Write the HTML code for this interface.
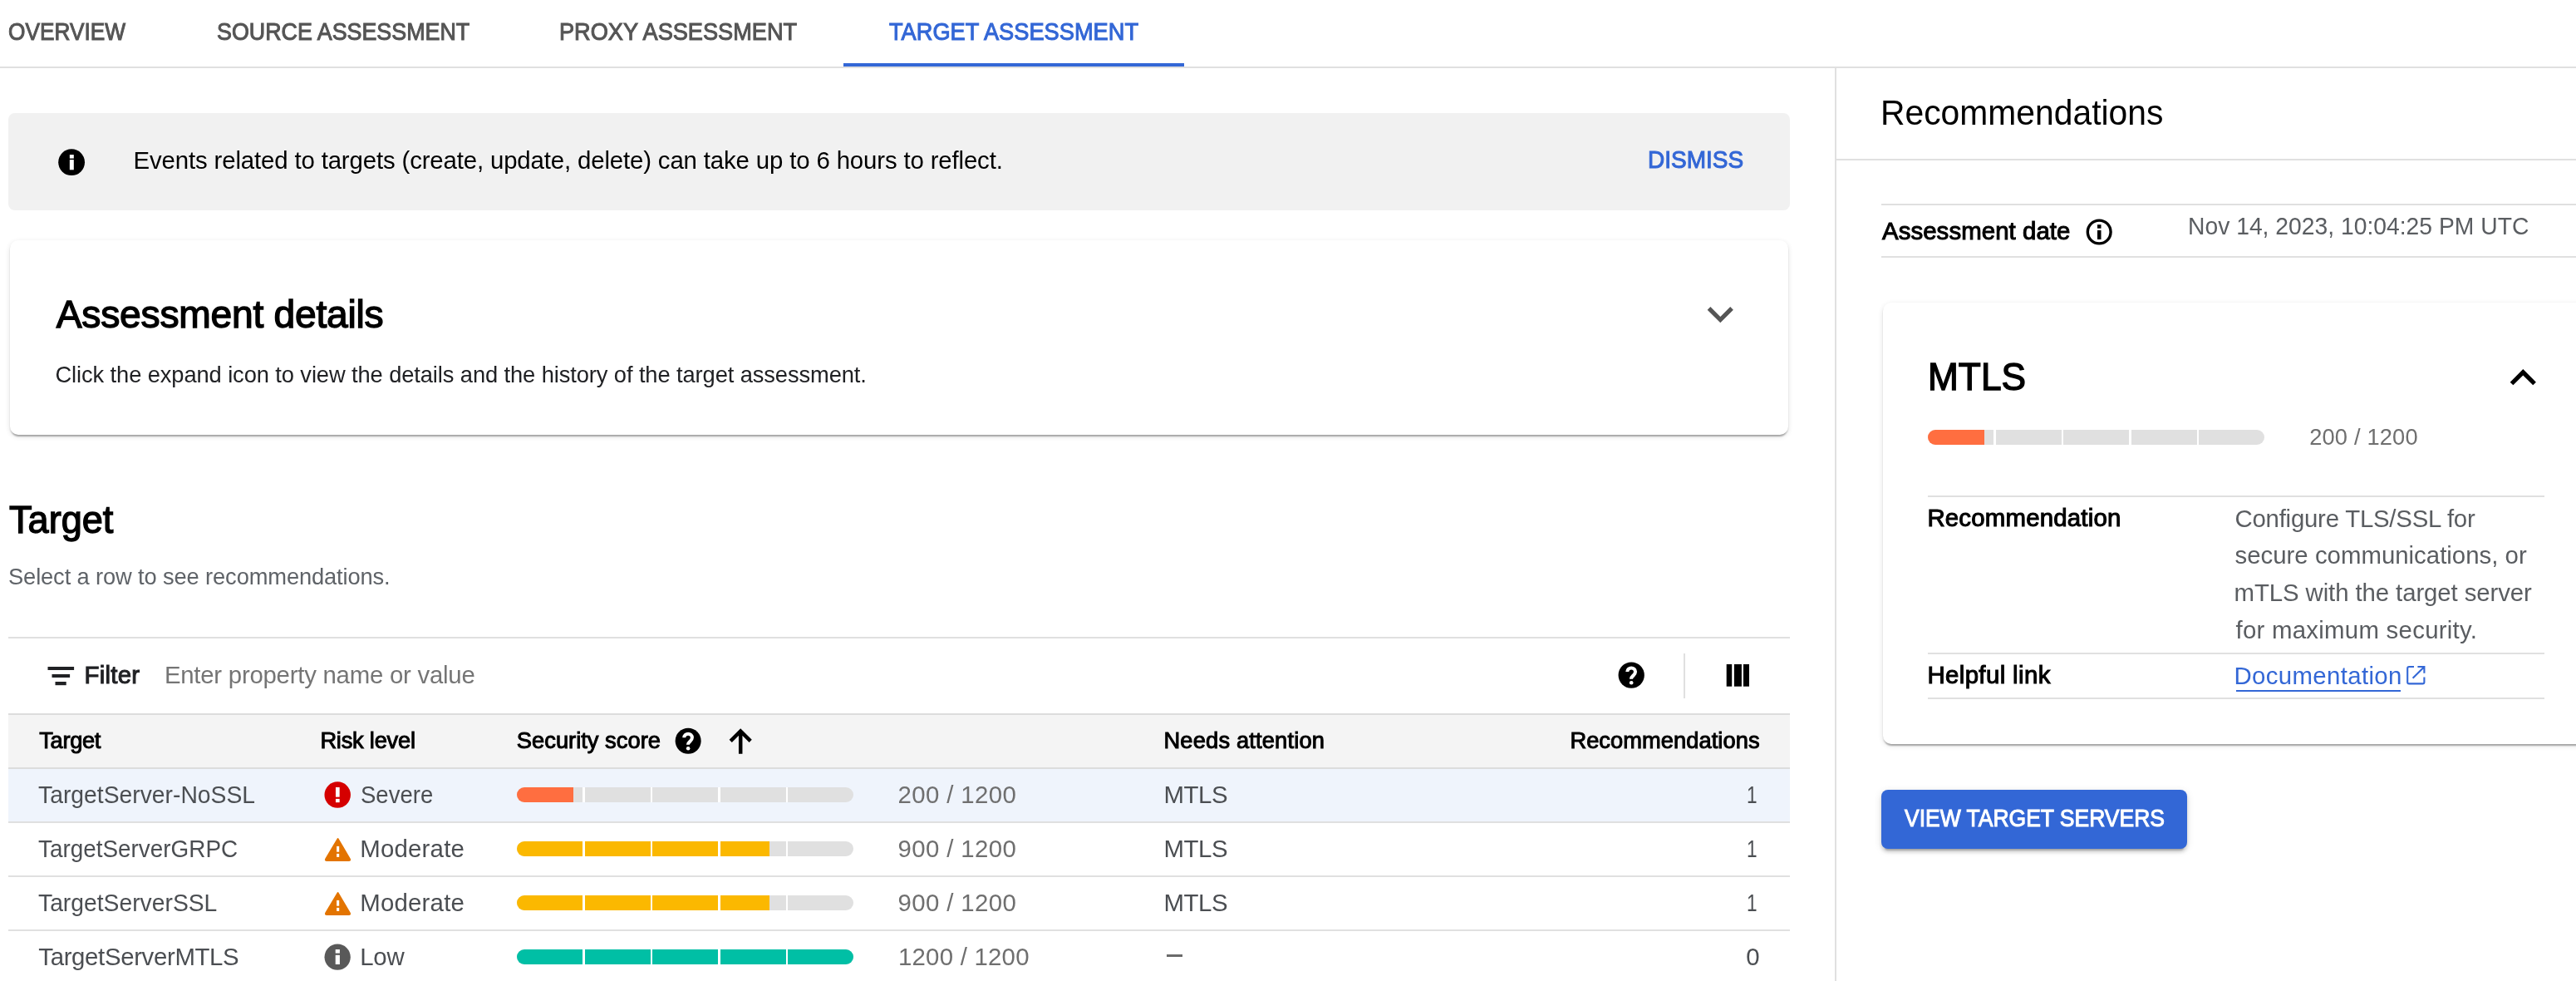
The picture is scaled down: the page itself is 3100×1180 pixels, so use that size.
<!DOCTYPE html>
<html><head><meta charset="utf-8"><title>Target assessment</title>
<style>
html,body{margin:0;padding:0;background:#fff;}
body{width:3100px;height:1180px;overflow:hidden;position:relative;font-family:"Liberation Sans",sans-serif;}
.t{position:absolute;white-space:pre;font-weight:400;}
.r{position:absolute;}
</style></head><body>
<div id="page" style="position:absolute;left:0;top:0;width:3100px;height:1180px;overflow:hidden;will-change:transform;">
<div class='r' style='left:0px;top:80px;width:3100px;height:2px;background:#e0e0e0;'></div><div class='r' style='left:1015px;top:76px;width:410px;height:4px;background:#3367d6;'></div><div class='r' style='left:2208px;top:82px;width:2px;height:1098px;background:#e0e0e0;'></div><div class='r' style='left:10px;top:136px;width:2144px;height:117px;background:#f1f1f1;border-radius:8px;'></div><div class='r' style='left:12px;top:289px;width:2140px;height:234px;background:#fff;border-radius:10px;box-shadow:0 4px 2px -2px rgba(0,0,0,.2),0 2px 2px 0 rgba(0,0,0,.14),0 2px 6px 0 rgba(0,0,0,.12);'></div><div class='r' style='left:10px;top:766px;width:2144px;height:2px;background:#e0e0e0;'></div><div class='r' style='left:2026px;top:786px;width:2px;height:54px;background:#e0e0e0;'></div><div class='r' style='left:10px;top:858px;width:2144px;height:2px;background:#dcdcdc;'></div><div class='r' style='left:10px;top:860px;width:2144px;height:63px;background:#f4f4f4;'></div><div class='r' style='left:10px;top:923px;width:2144px;height:2px;background:#dcdcdc;'></div><div class='r' style='left:10px;top:925px;width:2144px;height:63px;background:#eff4fc;'></div><div class='r' style='left:10px;top:988px;width:2144px;height:2px;background:#e0e0e0;'></div><div class='r' style='left:10px;top:1053px;width:2144px;height:2px;background:#e0e0e0;'></div><div class='r' style='left:10px;top:1118px;width:2144px;height:2px;background:#e0e0e0;'></div><div class='r' style='left:622px;top:947px;width:405px;height:18px;border-radius:9.0px;overflow:hidden;background:#e0e0e0'><div style='position:absolute;left:0;top:0;height:18px;width:67.5px;background:#ff6e40'></div><div style='position:absolute;left:79.0px;top:0;width:2.5px;height:18px;background:#ffffff'></div><div style='position:absolute;left:160.5px;top:0;width:2.5px;height:18px;background:#ffffff'></div><div style='position:absolute;left:242.0px;top:0;width:2.5px;height:18px;background:#ffffff'></div><div style='position:absolute;left:323.5px;top:0;width:2.5px;height:18px;background:#ffffff'></div></div><div class='r' style='left:622px;top:1012px;width:405px;height:18px;border-radius:9.0px;overflow:hidden;background:#e0e0e0'><div style='position:absolute;left:0;top:0;height:18px;width:303.8px;background:#fbb800'></div><div style='position:absolute;left:79.0px;top:0;width:2.5px;height:18px;background:#ffffff'></div><div style='position:absolute;left:160.5px;top:0;width:2.5px;height:18px;background:#ffffff'></div><div style='position:absolute;left:242.0px;top:0;width:2.5px;height:18px;background:#ffffff'></div><div style='position:absolute;left:323.5px;top:0;width:2.5px;height:18px;background:#ffffff'></div></div><div class='r' style='left:622px;top:1077px;width:405px;height:18px;border-radius:9.0px;overflow:hidden;background:#e0e0e0'><div style='position:absolute;left:0;top:0;height:18px;width:303.8px;background:#fbb800'></div><div style='position:absolute;left:79.0px;top:0;width:2.5px;height:18px;background:#ffffff'></div><div style='position:absolute;left:160.5px;top:0;width:2.5px;height:18px;background:#ffffff'></div><div style='position:absolute;left:242.0px;top:0;width:2.5px;height:18px;background:#ffffff'></div><div style='position:absolute;left:323.5px;top:0;width:2.5px;height:18px;background:#ffffff'></div></div><div class='r' style='left:622px;top:1142px;width:405px;height:18px;border-radius:9.0px;overflow:hidden;background:#e0e0e0'><div style='position:absolute;left:0;top:0;height:18px;width:405.0px;background:#00bfa5'></div><div style='position:absolute;left:79.0px;top:0;width:2.5px;height:18px;background:#ffffff'></div><div style='position:absolute;left:160.5px;top:0;width:2.5px;height:18px;background:#ffffff'></div><div style='position:absolute;left:242.0px;top:0;width:2.5px;height:18px;background:#ffffff'></div><div style='position:absolute;left:323.5px;top:0;width:2.5px;height:18px;background:#ffffff'></div></div><div class='r' style='left:1403.5px;top:1148.2px;width:19px;height:2.6px;background:#6a6a6a;'></div><div class='r' style='left:2210px;top:191px;width:890px;height:2px;background:#e0e0e0;'></div><div class='r' style='left:2264px;top:245px;width:836px;height:2px;background:#e0e0e0;'></div><div class='r' style='left:2264px;top:308px;width:836px;height:2px;background:#e0e0e0;'></div><div class='r' style='left:2266px;top:363.5px;width:900px;height:531.5px;background:#fff;border-radius:10px;box-shadow:0 4px 2px -2px rgba(0,0,0,.2),0 2px 2px 0 rgba(0,0,0,.14),0 2px 6px 0 rgba(0,0,0,.12);'></div><div class='r' style='left:2320px;top:517px;width:405px;height:18px;border-radius:9.0px;overflow:hidden;background:#e0e0e0'><div style='position:absolute;left:0;top:0;height:18px;width:67.5px;background:#ff6e40'></div><div style='position:absolute;left:79.0px;top:0;width:2.5px;height:18px;background:#ffffff'></div><div style='position:absolute;left:160.5px;top:0;width:2.5px;height:18px;background:#ffffff'></div><div style='position:absolute;left:242.0px;top:0;width:2.5px;height:18px;background:#ffffff'></div><div style='position:absolute;left:323.5px;top:0;width:2.5px;height:18px;background:#ffffff'></div></div><div class='r' style='left:2320px;top:596px;width:742px;height:2px;background:#e0e0e0;'></div><div class='r' style='left:2320px;top:785px;width:742px;height:2px;background:#e0e0e0;'></div><div class='r' style='left:2320px;top:839px;width:742px;height:2px;background:#e0e0e0;'></div><div class='r' style='left:2690.5px;top:830px;width:198px;height:2px;background:#3367d6;'></div><div class='r' style='left:2264px;top:949.5px;width:368px;height:71.5px;background:#3367d6;border-radius:8px;box-shadow:0 6px 2px -4px rgba(0,0,0,.2),0 4px 4px 0 rgba(0,0,0,.14),0 2px 10px 0 rgba(0,0,0,.12);'></div><svg class='r' style='left:0;top:0' width='3100' height='1180' viewBox='0 0 3100 1180'><circle cx='86.1' cy='195.2' r='15.9' fill='#000'/><rect x='83.85' y='186.1' width='4.95' height='4.50' fill='#fff'/><rect x='83.85' y='192.1' width='4.95' height='12.20' fill='#fff'/><circle cx='1963.2' cy='812.1' r='15.65' fill='#000'/><path d='M1958.30,808.10 A4.85,4.60 0 0 1 1968.00,808.10 C1968.00,810.60 1966.40,811.80 1965.20,812.90 C1963.60,814.30 1962.95,814.90 1962.95,816.80' fill='none' stroke='#fff' stroke-width='4.10'/><circle cx='1963.2' cy='821.2' r='2.3' fill='#fff'/><circle cx='828.15' cy='891.2' r='15.5' fill='#000'/><path d='M823.30,887.24 A4.80,4.55 0 0 1 832.90,887.24 C832.90,889.72 831.32,890.90 830.13,891.99 C828.55,893.38 827.90,893.97 827.90,895.85' fill='none' stroke='#fff' stroke-width='4.06'/><circle cx='828.15' cy='900.2090000000001' r='2.2769999999999997' fill='#fff'/><path d='M879.2,891.3 L891.2,879.4 L903.2,891.3 M891.2,881 V906.8' fill='none' stroke='#000' stroke-width='4.5' stroke-linejoin='miter'/><rect x='57.5' y='802' width='31.60' height='4.00' fill='#202124'/><rect x='62.5' y='811' width='21.60' height='4.00' fill='#202124'/><rect x='66.5' y='820' width='13.20' height='4.20' fill='#202124'/><rect x='2077.7' y='799' width='6.50' height='26.70' fill='#000'/><rect x='2086.9' y='799' width='9.00' height='26.70' fill='#000'/><rect x='2098.0' y='799' width='7.00' height='26.70' fill='#000'/><circle cx='406.2' cy='956.1' r='15.75' fill='#d50000'/><rect x='403.96' y='947' width='4.70' height='11.66' fill='#fff'/><rect x='403.96' y='960.9' width='4.70' height='4.30' fill='#fff'/><path d='M406.6,1009.2 L420.6,1033.0 Q421.8,1035 419.6,1035 L393.4,1035 Q391.2,1035 392.4,1033.0 Z' fill='#e37400' stroke='#e37400' stroke-width='2.2' stroke-linejoin='round'/><rect x='405.1' y='1017.9' width='3.10' height='6.80' fill='#fff'/><rect x='405.1' y='1026.9' width='3.10' height='4.00' fill='#fff'/><path d='M406.6,1074.2 L420.6,1098.0 Q421.8,1100 419.6,1100 L393.4,1100 Q391.2,1100 392.4,1098.0 Z' fill='#e37400' stroke='#e37400' stroke-width='2.2' stroke-linejoin='round'/><rect x='405.1' y='1082.9' width='3.10' height='6.80' fill='#fff'/><rect x='405.1' y='1091.9' width='3.10' height='4.00' fill='#fff'/><circle cx='406.15' cy='1151.2' r='15.65' fill='#595959'/><rect x='403.7' y='1142' width='5.20' height='4.60' fill='#fff'/><rect x='403.7' y='1148.8' width='5.20' height='11.20' fill='#fff'/><circle cx='2526.2' cy='279' r='13.9' fill='none' stroke='#000' stroke-width='3.4'/><rect x='2524' y='270.2' width='4.50' height='4.50' fill='#000'/><rect x='2524' y='277' width='4.50' height='11.00' fill='#000'/><path transform='translate(2039.1,346.7) scale(2.6)' d='M16.59 8.59L12 13.17 7.41 8.59 6 10l6 6 6-6z' fill='#555555'/><path transform='translate(3005.1,423.3) scale(2.6)' d='M12 8l-6 6 1.41 1.41L12 10.83l4.59 4.58L18 14z' fill='#000'/><path d='M2905,802 H2899.2 Q2897.2,802 2897.2,804 V820.4 Q2897.2,822.4 2899.2,822.4 H2915.4 Q2917.4,822.4 2917.4,820.4 V814.4 M2909.4,802 H2917.4 V809.7 M2917,802.4 L2903.6,815.8' fill='none' stroke='#3367d6' stroke-width='2.1'/></svg>
<div class='t' style='left:10.1px;top:22.6px;font-size:29.4px;line-height:29.4px;letter-spacing:0.000px;color:#555555;-webkit-text-stroke:1.06px #555555;transform:scaleX(0.8930);transform-origin:0 0;'>OVERVIEW</div><div class='t' style='left:260.6px;top:22.6px;font-size:29.4px;line-height:29.4px;letter-spacing:0.000px;color:#555555;-webkit-text-stroke:1.06px #555555;transform:scaleX(0.9130);transform-origin:0 0;'>SOURCE ASSESSMENT</div><div class='t' style='left:673.4px;top:22.6px;font-size:29.4px;line-height:29.4px;letter-spacing:0.000px;color:#555555;-webkit-text-stroke:1.06px #555555;transform:scaleX(0.9234);transform-origin:0 0;'>PROXY ASSESSMENT</div><div class='t' style='left:1069.7px;top:22.6px;font-size:29.4px;line-height:29.4px;letter-spacing:0.000px;color:#3367d6;-webkit-text-stroke:1.06px #3367d6;transform:scaleX(0.9262);transform-origin:0 0;'>TARGET ASSESSMENT</div><div class='t' style='left:160.6px;top:178.1px;font-size:29.4px;line-height:29.4px;letter-spacing:-0.148px;color:#000000;'>Events related to targets (create, update, delete) can take up to 6 hours to reflect.</div><div class='t' style='left:1982.9px;top:176.8px;font-size:29.4px;line-height:29.4px;letter-spacing:0.000px;color:#3367d6;-webkit-text-stroke:1.06px #3367d6;transform:scaleX(0.9525);transform-origin:0 0;'>DISMISS</div><div class='t' style='left:67.8px;top:355.2px;font-size:46.2px;line-height:46.2px;letter-spacing:-0.235px;color:#000000;-webkit-text-stroke:1.40px #000000;'>Assessment details</div><div class='t' style='left:66.5px;top:436.9px;font-size:27.3px;line-height:27.3px;letter-spacing:-0.102px;color:#202124;'>Click the expand icon to view the details and the history of the target assessment.</div><div class='t' style='left:11.0px;top:602.2px;font-size:46.2px;line-height:46.2px;letter-spacing:0.000px;color:#000000;-webkit-text-stroke:1.40px #000000;transform:scaleX(0.9767);transform-origin:0 0;'>Target</div><div class='t' style='left:10.0px;top:679.9px;font-size:27.3px;line-height:27.3px;letter-spacing:-0.131px;color:#5f6368;'>Select a row to see recommendations.</div><div class='t' style='left:101.6px;top:796.6px;font-size:29.4px;line-height:29.4px;letter-spacing:0.240px;color:#202124;-webkit-text-stroke:1.06px #202124;'>Filter</div><div class='t' style='left:197.9px;top:797.2px;font-size:29.4px;line-height:29.4px;letter-spacing:-0.252px;color:#757575;'>Enter property name or value</div><div class='t' style='left:47.3px;top:876.7px;font-size:27.3px;line-height:27.3px;letter-spacing:-0.360px;color:#000000;-webkit-text-stroke:0.98px #000000;'>Target</div><div class='t' style='left:385.4px;top:876.6px;font-size:27.3px;line-height:27.3px;letter-spacing:-0.244px;color:#000000;-webkit-text-stroke:0.98px #000000;'>Risk level</div><div class='t' style='left:621.8px;top:876.6px;font-size:27.3px;line-height:27.3px;letter-spacing:0.015px;color:#000000;-webkit-text-stroke:0.98px #000000;'>Security score</div><div class='t' style='left:1400.5px;top:876.8px;font-size:27.3px;line-height:27.3px;letter-spacing:0.157px;color:#000000;-webkit-text-stroke:0.98px #000000;'>Needs attention</div><div class='t' style='left:1889.4px;top:876.8px;font-size:27.3px;line-height:27.3px;letter-spacing:0.043px;color:#000000;-webkit-text-stroke:0.98px #000000;'>Recommendations</div><div class='t' style='left:46.3px;top:941.1px;font-size:29.4px;line-height:29.4px;letter-spacing:0.000px;color:#4b4e52;transform:scaleX(0.9628);transform-origin:0 0;'>TargetServer-NoSSL</div><div class='t' style='left:46.4px;top:1006.1px;font-size:29.4px;line-height:29.4px;letter-spacing:0.000px;color:#4b4e52;transform:scaleX(0.9486);transform-origin:0 0;'>TargetServerGRPC</div><div class='t' style='left:46.3px;top:1071.1px;font-size:29.4px;line-height:29.4px;letter-spacing:0.000px;color:#4b4e52;transform:scaleX(0.9622);transform-origin:0 0;'>TargetServerSSL</div><div class='t' style='left:46.3px;top:1136.1px;font-size:29.4px;line-height:29.4px;letter-spacing:-0.347px;color:#4b4e52;'>TargetServerMTLS</div><div class='t' style='left:433.9px;top:941.1px;font-size:29.4px;line-height:29.4px;letter-spacing:0.000px;color:#4b4e52;transform:scaleX(0.9363);transform-origin:0 0;'>Severe</div><div class='t' style='left:433.3px;top:1006.1px;font-size:29.4px;line-height:29.4px;letter-spacing:0.200px;color:#4b4e52;'>Moderate</div><div class='t' style='left:433.3px;top:1071.1px;font-size:29.4px;line-height:29.4px;letter-spacing:0.200px;color:#4b4e52;'>Moderate</div><div class='t' style='left:433.3px;top:1136.1px;font-size:29.4px;line-height:29.4px;letter-spacing:-0.300px;color:#4b4e52;'>Low</div><div class='t' style='left:1080.5px;top:941.1px;font-size:29.4px;line-height:29.4px;letter-spacing:0.378px;color:#6f6f6f;'>200 / 1200</div><div class='t' style='left:1080.5px;top:1006.1px;font-size:29.4px;line-height:29.4px;letter-spacing:0.378px;color:#6f6f6f;'>900 / 1200</div><div class='t' style='left:1080.5px;top:1071.1px;font-size:29.4px;line-height:29.4px;letter-spacing:0.378px;color:#6f6f6f;'>900 / 1200</div><div class='t' style='left:1080.9px;top:1135.6px;font-size:29.4px;line-height:29.4px;letter-spacing:0.240px;color:#6f6f6f;'>1200 / 1200</div><div class='t' style='left:1400.5px;top:941.1px;font-size:29.4px;line-height:29.4px;letter-spacing:-0.467px;color:#4b4e52;'>MTLS</div><div class='t' style='left:1400.5px;top:1006.1px;font-size:29.4px;line-height:29.4px;letter-spacing:-0.467px;color:#4b4e52;'>MTLS</div><div class='t' style='left:1400.5px;top:1071.1px;font-size:29.4px;line-height:29.4px;letter-spacing:-0.467px;color:#4b4e52;'>MTLS</div><div class='t' style='left:2102.0px;top:941.1px;font-size:29.4px;line-height:29.4px;letter-spacing:0.000px;color:#4b4e52;transform:scaleX(0.7692);transform-origin:0 0;'>1</div><div class='t' style='left:2102.0px;top:1006.1px;font-size:29.4px;line-height:29.4px;letter-spacing:0.000px;color:#4b4e52;transform:scaleX(0.7692);transform-origin:0 0;'>1</div><div class='t' style='left:2102.0px;top:1071.1px;font-size:29.4px;line-height:29.4px;letter-spacing:0.000px;color:#4b4e52;transform:scaleX(0.7692);transform-origin:0 0;'>1</div><div class='t' style='left:2101.2px;top:1136.1px;font-size:29.4px;line-height:29.4px;letter-spacing:0.000px;color:#4b4e52;'>0</div><div class='t' style='left:2262.9px;top:114.8px;font-size:42.0px;line-height:42.0px;letter-spacing:0.000px;color:#000000;transform:scaleX(0.9720);transform-origin:0 0;'>Recommendations</div><div class='t' style='left:2265.0px;top:262.5px;font-size:29.4px;line-height:29.4px;letter-spacing:0.071px;color:#000000;-webkit-text-stroke:1.06px #000000;'>Assessment date</div><div class='t' style='left:2632.6px;top:256.8px;font-size:29.4px;line-height:29.4px;letter-spacing:0.000px;color:#5a5d61;transform:scaleX(0.9624);transform-origin:0 0;'>Nov 14, 2023, 10:04:25 PM UTC</div><div class='t' style='left:2320.1px;top:429.8px;font-size:46.2px;line-height:46.2px;letter-spacing:0.000px;color:#000000;-webkit-text-stroke:1.40px #000000;transform:scaleX(0.9580);transform-origin:0 0;'>MTLS</div><div class='t' style='left:2779.2px;top:512.1px;font-size:27.3px;line-height:27.3px;letter-spacing:0.156px;color:#6f6f6f;'>200 / 1200</div><div class='t' style='left:2319.4px;top:608.0px;font-size:29.4px;line-height:29.4px;letter-spacing:0.200px;color:#000000;-webkit-text-stroke:1.06px #000000;'>Recommendation</div><div class='t' style='left:2319.4px;top:797.3px;font-size:29.4px;line-height:29.4px;letter-spacing:0.382px;color:#000000;-webkit-text-stroke:1.06px #000000;'>Helpful link</div><div class='t' style='left:2689.5px;top:608.5px;font-size:29.4px;line-height:29.4px;letter-spacing:-0.240px;color:#5a5d61;'>Configure TLS/SSL for</div><div class='t' style='left:2689.5px;top:653.1px;font-size:29.4px;line-height:29.4px;letter-spacing:0.000px;color:#5a5d61;'>secure communications, or</div><div class='t' style='left:2688.5px;top:697.8px;font-size:29.4px;line-height:29.4px;letter-spacing:-0.100px;color:#5a5d61;'>mTLS with the target server</div><div class='t' style='left:2690.5px;top:742.6px;font-size:29.4px;line-height:29.4px;letter-spacing:0.260px;color:#5a5d61;'>for maximum security.</div><div class='t' style='left:2688.5px;top:797.8px;font-size:29.4px;line-height:29.4px;letter-spacing:0.350px;color:#3367d6;'>Documentation</div><div class='t' style='left:2292.0px;top:969.1px;font-size:29.4px;line-height:29.4px;letter-spacing:0.000px;color:#ffffff;-webkit-text-stroke:1.06px #ffffff;transform:scaleX(0.9009);transform-origin:0 0;'>VIEW TARGET SERVERS</div>
</div>
</body></html>
